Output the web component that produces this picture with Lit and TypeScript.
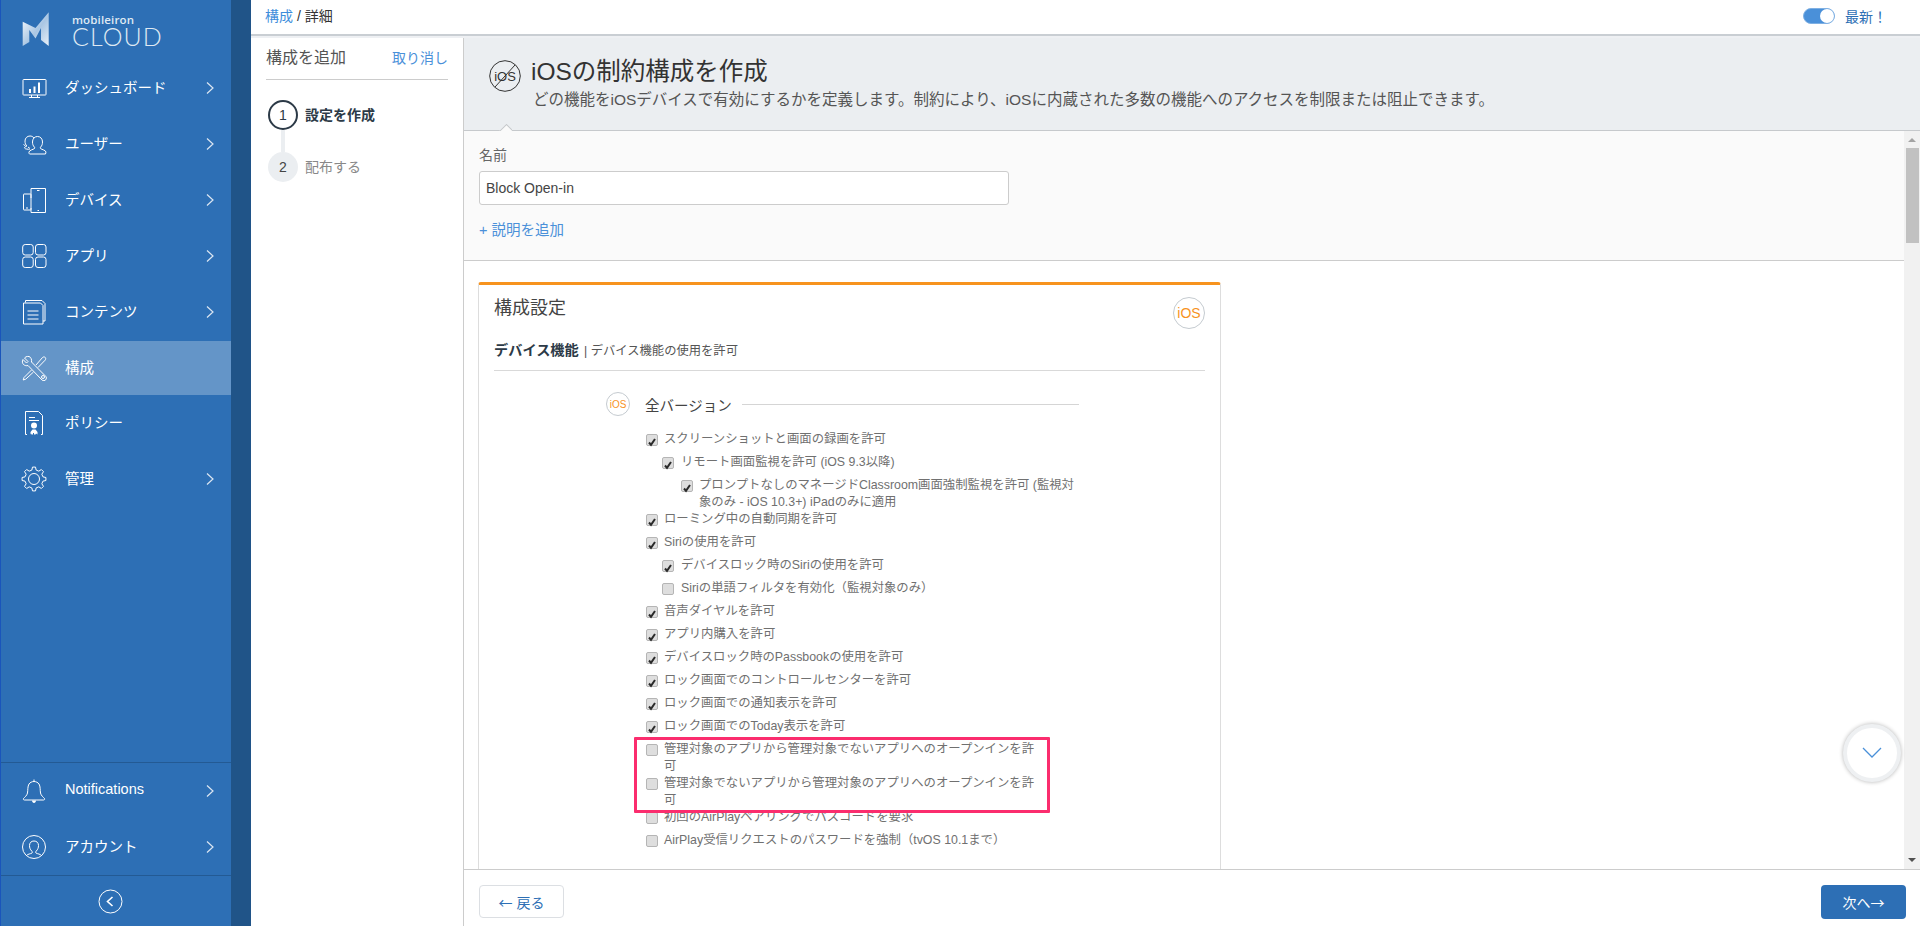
import { LitElement, html, css, svg } from "lit";
import { customElement } from "lit/decorators.js";

function gearPath(): string {
  const cx = 13, cy = 13, teeth = 8;
  const pts: string[] = [];
  for (let i = 0; i < teeth; i++) {
    const a = (i / teeth) * Math.PI * 2;
    const step = (Math.PI * 2) / teeth;
    const add = (r: number, t: number) =>
      pts.push(`${(cx + r * Math.sin(a + t)).toFixed(2)} ${(cy - r * Math.cos(a + t)).toFixed(2)}`);
    add(12, -step * 0.16);
    add(12, step * 0.16);
    add(9.2, step * 0.3);
    add(9.2, step * 0.7);
  }
  return "M" + pts.join("L") + "Z";
}

const icons: Record<string, unknown> = {
  dash: svg`<rect x="2" y="4.5" width="23" height="15.5" rx=".6"/><path d="M8 22.5h11M10.5 20v2.5M16.5 20v2.5"/><path class="fill" d="M8 14h2v4H8zM12.5 11.5h2V18h-2zM17 7.5h2V18h-2z"/>`,
  user: svg`<path d="M8.5 18.5c-1-.4-4.5-.2-5-1.5 0-1 1.300-1.500 2.500-2-1.500-1-2-3-2-5 0-3 2.300-5 5-5 1.700 0 3 .7 4 2"/><path d="M25 23.500H9.500c-1 0-1.200-.8-1-2 .4-1.900 4-2.300 5.500-3.500.4-.5.300-1-.2-1.500-1.300-1.300-1.800-3-1.800-5 0-3.200 2-5.500 5-5.500s5 2.300 5 5.500c0 2-.5 3.700-1.800 5-.5.500-.6 1-.2 1.500 1.500 1.200 5.100 1.600 5.500 3.500z" transform="translate(-.5 -.5)"/><path d="M2.500 13.500l2 1.500M7 16l2 1.500"/>`,
  device: svg`<path d="M10 11V1.500h14.500v24H10V21"/><rect x="2.500" y="9" width="7.500" height="16" rx=".5" transform="translate(0 -2)"/><path d="M16 3.500h2.500M16.500 23.500h1.500M5 21h2"/>`,
  apps: svg`<rect x="1.700" y="1.500" width="10.500" height="10.500" rx="2.500"/><rect x="14.500" y="1.500" width="10.500" height="10.500" rx="2.500"/><rect x="1.700" y="14" width="10.500" height="10.500" rx="2.500"/><rect x="14.500" y="14" width="10.500" height="10.500" rx="2.500"/>`,
  content: svg`<path d="M4.500 3.500V1.500H21l3 3V22h-2"/><path d="M2.500 4h17l2.500 2.500V25h-19.500z"/><path d="M6.500 12h11M6.500 16h11M6.500 20h11"/>`,
  config: svg`<path d="M8 1.500c-2.500-.5-4 1-4.500 1.500L7 6.500 5.500 8 2 4.500c-1 2-.8 3.500.5 5 1.300 1.200 3 1.500 4.500 1l14 14.500c1 1 3 .8 3.700-.2.900-1 .9-2.700 0-3.500L10.500 7c.5-2-.5-5-2.500-5.500z"/><circle cx="22" cy="22" r="1.500"/><path d="M15 10l6.500-7.500c1-1 2.500-.5 2.800 0 .5.800.7 1.700-.2 2.700L17 12.500M10.500 15L3 22.500l-.8 2.500 2.500-.8 7.800-7.200"/>`,
  policy: svg`<path d="M6 24.500H4.500V1.500h13l4 4v19H20"/><path d="M8 7.500h6M8 10.500h10"/><circle class="fill" cx="13" cy="15.500" r="3"/><path class="fill" d="M9.500 24.500v-2.500l2-2.500h3l2 2.500v2.500l-1.500-1-.5 1h-1.500v-1.500h-1v1.500h-1.500l-.5-1z"/>`,
  gear: svg`<path d="${gearPath()}"/><circle cx="13" cy="13" r="5.500"/>`,
  bell: svg`<path d="M2.500 22c1-1 3.500-3 4-5.500.5-3 0-6.500 1.500-9 1-1.500 3-2.500 5-2.500s4 1 5 2.500c1.500 2.500 1 6 1.500 9 .5 2.500 3 4.500 4 5.500.5.800 0 1.500-1 1.500H3.500c-1 0-1.500-.7-1-1.500z" transform="translate(0 -1.500)"/><path class="fill" d="M11 22.500h4c0 1.500-1 2.500-2 2.500s-2-1-2-2.500z"/><path d="M13 1.500v2"/>`,
  account: svg`<circle cx="13" cy="13" r="11.500"/><path d="M5.500 21.500c1-1.500 4-1.500 5.500-2.500.7-.5.300-1.300-.3-2-1.500-1.500-2.200-3.300-2.200-5.500 0-2.800 1.900-4.500 4.500-4.500s4.500 1.700 4.500 4.500c0 2.200-.7 4-2.200 5.500-.6.700-1 1.500-.3 2 1.500 1 4.500 1 5.500 2.500"/>`,
};

interface NavItem { k: string; t: string; c?: boolean; active?: boolean }
const NAV: NavItem[] = [
  { k: "dash", t: "ダッシュボード", c: true },
  { k: "user", t: "ユーザー", c: true },
  { k: "device", t: "デバイス", c: true },
  { k: "apps", t: "アプリ", c: true },
  { k: "content", t: "コンテンツ", c: true },
  { k: "config", t: "構成", active: true },
  { k: "policy", t: "ポリシー" },
  { k: "gear", t: "管理", c: true },
];
const NAV_BOTTOM: NavItem[] = [
  { k: "bell", t: "Notifications", c: true },
  { k: "account", t: "アカウント", c: true },
];

interface Opt { l: number; on: boolean; t: unknown }
const OPTS: Opt[] = [
  { l: 0, on: true, t: "スクリーンショットと画面の録画を許可" },
  { l: 1, on: true, t: "リモート画面監視を許可 (iOS 9.3以降)" },
  { l: 2, on: true, t: html`プロンプトなしのマネージドClassroom画面強制監視を許可 (監視対<br />象のみ - iOS 10.3+) iPadのみに適用` },
  { l: 0, on: true, t: "ローミング中の自動同期を許可" },
  { l: 0, on: true, t: "Siriの使用を許可" },
  { l: 1, on: true, t: "デバイスロック時のSiriの使用を許可" },
  { l: 1, on: false, t: "Siriの単語フィルタを有効化（監視対象のみ）" },
  { l: 0, on: true, t: "音声ダイヤルを許可" },
  { l: 0, on: true, t: "アプリ内購入を許可" },
  { l: 0, on: true, t: "デバイスロック時のPassbookの使用を許可" },
  { l: 0, on: true, t: "ロック画面でのコントロールセンターを許可" },
  { l: 0, on: true, t: "ロック画面での通知表示を許可" },
  { l: 0, on: true, t: "ロック画面でのToday表示を許可" },
  { l: 0, on: false, t: html`管理対象のアプリから管理対象でないアプリへのオープンインを許<br />可` },
  { l: 0, on: false, t: html`管理対象でないアプリから管理対象のアプリへのオープンインを許<br />可` },
  { l: 0, on: false, t: "初回のAirPlayペアリングでパスコードを要求" },
  { l: 0, on: false, t: "AirPlay受信リクエストのパスワードを強制（tvOS 10.1まで）" },
];

@customElement("app-root")
export class AppRoot extends LitElement {
  static styles = css`
    :host {
      display: flex;
      width: 1920px;
      height: 926px;
      overflow: hidden;
      background: #fff;
      font-family: "Liberation Sans", "Noto Sans CJK JP", sans-serif;
      color: #3c4650;
    }
    * { box-sizing: border-box; }
    .side {
      width: 231px;
      flex: none;
      background: #2d6fb5;
      border-left: 1px solid #1a55bb;
      display: flex;
      flex-direction: column;
      color: #fff;
    }
    .band { width: 20px; flex: none; background: #205488; }
    .logo { height: 60px; display: flex; flex: none; padding: 12px 0 0 20px; }
    .logo svg { width: 28px; height: 35px; display: block; }
    .logotext { margin-left: 23px; line-height: 1; }
    .mob { font-size: 11.5px; font-weight: 600; letter-spacing: .15px; color: #dfe9f3; height: 12px; line-height: 12px; margin-top: 2px; font-family: "Open Sans", sans-serif; }
    .cloud { font-family: Lato, sans-serif; font-weight: 300; font-size: 25px; line-height: 18px; letter-spacing: 1.1px; color: #dfe9f3; margin-top: 1px; }
    .nav { height: 56px; flex: none; display: flex; align-items: center; padding: 0 17px 0 20px; font-size: 14.5px; color: #fff; }
    .nav.active { height: 54px; margin-top: 1px; background: #6495c8; }
    .nav .ico { width: 26px; height: 26px; flex: none; fill: none; stroke: #fff; stroke-width: 1; }
    .nav .ico .fill { fill: #fff; stroke: none; }
    .nav .lbl { margin-left: 18px; position: relative; top: -2px; }
    .chev { margin-left: auto; width: 8px; height: 12px; fill: none; stroke: #dbe6f2; stroke-width: 1.2; flex: none; }
    .side-bottom { margin-top: auto; border-top: 1px solid #235a94; }
    .collapse { height: 51px; border-top: 1px solid #235a94; display: flex; align-items: center; justify-content: center; padding-right: 12px; }
    .collapse svg { width: 25px; height: 25px; fill: none; stroke: #fff; stroke-width: 1; }

    .main { flex: 1; min-width: 0; display: flex; flex-direction: column; }
    .top { height: 36px; flex: none; border-bottom: 2px solid #c9ced3; display: flex; align-items: center; padding: 0 0 5px 14px; font-size: 14px; color: #333; }
    .top a { color: #3d8ddb; }
    .latest { margin-left: auto; display: flex; align-items: center; color: #2d6fb5; padding: 2px 33px 0 0; }
    .toggle { width: 32px; height: 16px; border-radius: 8px; background: #4a90d9; border: 1px solid #7fb0e3; position: relative; margin-right: 10px; }
    .toggle::after { content: ""; position: absolute; right: 0; top: 0; width: 14px; height: 14px; border-radius: 50%; background: #fff; }

    .body { flex: 1; min-height: 0; display: flex; border-top: 2px solid #eef0f3; }
    .steps { width: 213px; flex: none; border-right: 1px solid #ccc; padding: 10px 15px 0; }
    .sh { display: flex; justify-content: space-between; line-height: 20px; padding-bottom: 11px; border-bottom: 1px solid #ccc; font-size: 14px; color: #555; }
    .sh span { font-size: 16px; }
    .sh a { color: #4a90d9; }
    .stepl { margin-top: 20px; padding-left: 2px; }
    .step { display: flex; align-items: center; font-size: 14px; height: 30px; gap: 7px; color: #888; }
    .step.cur { color: #2c3a47; font-weight: 700; }
    .stxt { padding-bottom: 2px; }
    .num { width: 30px; height: 30px; border-radius: 50%; background: #ebeef1; display: flex; align-items: center; justify-content: center; font-weight: 400; color: #444; font-size: 14px; }
    .step.cur .num { background: #fff; border: 2px solid #2c3a47; color: #2c3a47; }
    .conn { width: 4px; height: 22px; margin-left: 13px; background: #ebeef1; }

    .work { flex: 1; min-width: 0; display: flex; flex-direction: column; }
    .head { height: 93px; flex: none; background: #ebeef1; border-bottom: 1px solid #c6c9cc; display: flex; padding: 18px 0 0 25px; position: relative; }
    .head .nop { width: 32px; height: 32px; margin-top: 4px; flex: none; }
    .nop text { font-size: 13px; fill: #333; font-family: "Liberation Sans", sans-serif; }
    .htext { margin-left: 10px; }
    .h1 { font-size: 24.5px; line-height: 30px; margin-top: 1px; color: #333; }
    .h2 { font-size: 15.5px; line-height: 20px; margin-top: 3px; color: #555; padding-left: 2px; white-space: nowrap; }
    .notch { position: absolute; left: 35px; bottom: -1px; width: 13px; height: 7px; overflow: hidden; }
    .notch::after { content: ""; position: absolute; left: 2px; top: 2px; width: 9px; height: 9px; background: #fafafa; border: 1px solid #c6c9cc; transform: rotate(45deg); }

    .scrollwrap { flex: 1; min-height: 0; display: flex; position: relative; }
    .content { flex: 1; min-width: 0; overflow: hidden; }
    .name { height: 130px; background: #fafafa; border-bottom: 1px solid #ccc; padding: 14px 15px 0; }
    .name label { display: block; font-size: 14px; line-height: 20px; color: #666; }
    .input { width: 530px; height: 34px; margin-top: 6px; background: #fff; border: 1px solid #ccc; border-radius: 3px; padding: 0 6px; line-height: 32px; font-size: 14px; color: #444; }
    .add { display: block; margin-top: 15px; line-height: 20px; font-size: 14.5px; color: #4a90d9; }

    .card { margin: 21px 0 40px 14px; width: 743px; border: 1px solid #ddd; border-top: 3px solid #f7931e; border-radius: 3px; padding: 12px 15px 60px; background: #fff; }
    .ctop { display: flex; justify-content: space-between; align-items: flex-start; }
    .ctitle { font-size: 18px; line-height: 22px; color: #444; }
    .badge { border-radius: 50%; border: 1px solid #c5cbd0; color: #f7931e; display: flex; align-items: center; justify-content: center; flex: none; background: #fff; }
    .badge.big { width: 32px; height: 32px; font-size: 14px; }
    .badge.small { width: 24px; height: 24px; font-size: 10px; }
    .sub { margin-top: 12px; line-height: 18px; font-size: 12.3px; color: #555; padding-bottom: 10px; border-bottom: 1px solid #d9d9d9; }
    .sub b { font-size: 14.2px; color: #2c3a47; margin-right: 2px; }
    .ver { display: flex; align-items: center; margin: 21px 0 0 112px; width: 473px; font-size: 14.5px; color: #444; }
    .ver span.t { margin-left: 15px; }
    .ver i { flex: 1; height: 1px; background: #d5d5d5; margin-left: 10px; }
    .opts { position: relative; margin: 15px 0 0 152px; font-size: 12.37px; line-height: 17px; color: #707070; }
    .opt { display: flex; min-height: 23px; align-items: flex-start; }
    .opt.l1 { margin-left: 16px; }
    .opt.l2 { margin-left: 35px; }
    .cb { width: 12px; height: 12px; margin: 3px 6px 0 0; flex: none; border: 1px solid #b5b5b5; border-radius: 2px; background: #dedede; display: block; }
    .opt.l1 .cb { margin-right: 7px; }
    .pink { position: absolute; left: -12px; top: 306px; width: 416px; height: 76px; border: 3px solid #fb2d6e; border-radius: 1px; pointer-events: none; }

    .sbar { width: 16px; flex: none; background: #f1f1f1; position: relative; display: flex; flex-direction: column; align-items: center; }
    .sbar .up { margin-top: 7px; width: 0; height: 0; border: 4px solid transparent; border-top: 0; border-bottom: 4px solid #a3a3a3; }
    .sbar .thumb { width: 13px; height: 95px; margin-top: 6px; background: #c1c1c1; }
    .sbar .dn { margin-top: auto; margin-bottom: 7px; width: 0; height: 0; border: 4px solid transparent; border-bottom: 0; border-top: 4px solid #505050; }
    .float { position: absolute; right: 19px; bottom: 87px; width: 58px; height: 58px; border-radius: 50%; background: #fff; border: 4px solid #eef0f2; box-shadow: 0 0 4px rgba(0, 0, 0, .3); display: flex; align-items: center; justify-content: center; }
    .float svg { width: 20px; height: 12px; fill: none; stroke: #4a90d9; stroke-width: 1.300; }

    .foot { height: 57px; flex: none; border-top: 1px solid #ccc; display: flex; justify-content: space-between; padding: 15px 14px 0 15px; }
    .btn { height: 34px; width: 85px; border-radius: 4px; display: flex; align-items: center; justify-content: center; font-size: 14px; }
    .arr { font-family: "Noto Sans CJK JP", sans-serif; }
    .btn.back { border: 1px solid #dcdfe3; color: #2d6fb5; background: #fff; height: 33px; }
    .btn.next { background: #2d6fb5; color: #fff; }
  `;

  private ico(k: string) {
    return html`<svg class="ico" viewBox="0 0 26 26">${icons[k]}</svg>`;
  }
  private navItem(n: NavItem) {
    return html`<div class="nav ${n.active ? "active" : ""}">
      ${this.ico(n.k)}<span class="lbl">${n.t}</span>
      ${n.c ? html`<svg class="chev" viewBox="0 0 8 12"><path d="M1 .5L7 6l-6 5.500" /></svg>` : ""}
    </div>`;
  }
  private opt(o: Opt) {
    return html`<div class="opt l${o.l}">
      <span class="cb">${o.on
        ? html`<svg viewBox="0 0 10 10" width="10" height="10"><path d="M2 5.500l2 2.300L8 2" fill="none" stroke="#2a2a2a" stroke-width="2"/></svg>`
        : ""}</span>
      <span>${o.t}</span>
    </div>`;
  }

  render() {
    return html`
      <aside class="side">
        <div class="logo">
          <svg viewBox="0 0 28 35">
            <defs><linearGradient id="lg" x1="0" y1="0" x2="1" y2="1"><stop offset="0" stop-color="#ffffff"/><stop offset=".55" stop-color="#a9c6e3"/><stop offset="1" stop-color="#e8f0f8"/></linearGradient></defs>
            <path fill="url(#lg)" d="M1.700 9.700L14.500 16 27.700.3V34L20 28V16l-5.500 10.500L8.300 18v12l-6.600 4z"/>
          </svg>
          <div class="logotext"><div class="mob">mobileiron</div><div class="cloud">CLOUD</div></div>
        </div>
        ${NAV.map((n) => this.navItem(n))}
        <div class="side-bottom">${NAV_BOTTOM.map((n) => this.navItem(n))}</div>
        <div class="collapse"><svg viewBox="0 0 25 25"><circle cx="12.500" cy="12.500" r="11.500"/><path stroke-width="1.600" d="M14.500 8l-5 4.500 5 4.500"/></svg></div>
      </aside>
      <div class="band"></div>
      <div class="main">
        <div class="top">
          <span><a>構成</a> / 詳細</span>
          <div class="latest"><span class="toggle"></span>最新！</div>
        </div>
        <div class="body">
          <div class="steps">
            <div class="sh"><span>構成を追加</span><a>取り消し</a></div>
            <div class="stepl">
              <div class="step cur"><span class="num">1</span><span class="stxt">設定を作成</span></div>
              <div class="conn"></div>
              <div class="step"><span class="num">2</span><span class="stxt">配布する</span></div>
            </div>
          </div>
          <div class="work">
            <div class="head">
              <svg class="nop" viewBox="0 0 32 32">
                <circle cx="16" cy="16" r="15.300" fill="none" stroke="#333" stroke-width="1"/>
                <text x="16" y="20.500" text-anchor="middle">iOS</text>
                <path d="M6 27L26 5" stroke="#333" stroke-width="1"/>
              </svg>
              <div class="htext">
                <div class="h1">iOSの制約構成を作成</div>
                <div class="h2">どの機能をiOSデバイスで有効にするかを定義します。制約により、iOSに内蔵された多数の機能へのアクセスを制限または阻止できます。</div>
              </div>
              <div class="notch"></div>
            </div>
            <div class="scrollwrap">
              <div class="content">
                <div class="name">
                  <label>名前</label>
                  <div class="input">Block Open-in</div>
                  <a class="add">+ 説明を追加</a>
                </div>
                <div class="card">
                  <div class="ctop"><div class="ctitle">構成設定</div><div class="badge big">iOS</div></div>
                  <div class="sub"><b>デバイス機能</b> | デバイス機能の使用を許可</div>
                  <div class="ver"><div class="badge small">iOS</div><span class="t">全バージョン</span><i></i></div>
                  <div class="opts">
                    ${OPTS.map((o) => this.opt(o))}
                    <div class="pink"></div>
                  </div>
                </div>
              </div>
              <div class="sbar"><div class="up"></div><div class="thumb"></div><div class="dn"></div></div>
              <div class="float"><svg viewBox="0 0 20 12"><path d="M1 1l9 9 9-9"/></svg></div>
            </div>
            <div class="foot">
              <div class="btn back"><span class="arr">←</span>&nbsp;戻る</div>
              <div class="btn next">次へ<span class="arr">→</span></div>
            </div>
          </div>
        </div>
      </div>
    `;
  }
}
